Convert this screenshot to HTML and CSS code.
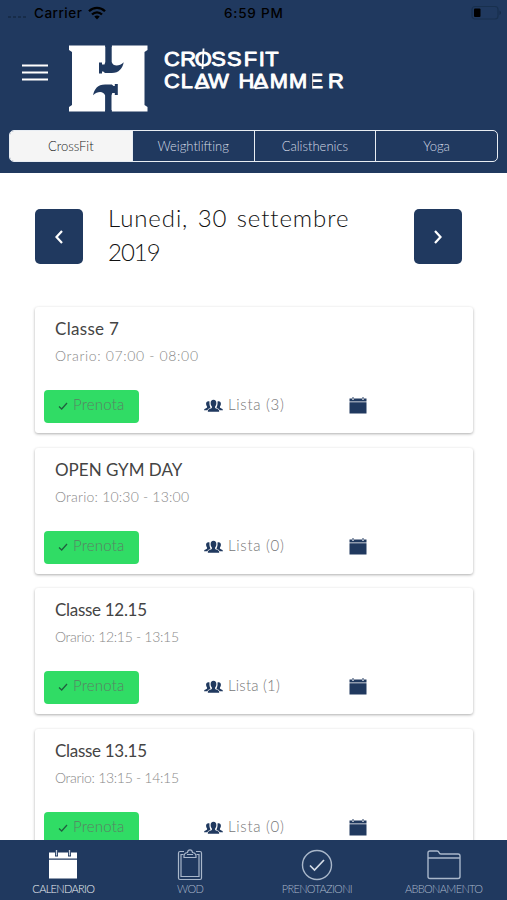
FILE: index.html
```html
<!DOCTYPE html>
<html lang="it">
<head>
<meta charset="utf-8">
<title>CrossFit Claw Hammer</title>
<link rel="stylesheet" href="styles.css">
</head>
<body>
<svg width="0" height="0" class="defs" aria-hidden="true">
  <symbol id="check" viewBox="0 0 12 12"><path d="M2 6.500 4.700 9 10 3" fill="none" stroke="currentColor" stroke-width="1.300"/></symbol>
  <symbol id="people" viewBox="0 0 20 14"><path d="M10 .5c2 0 3.200 1.400 3 3.800-.1 1.600-.7 2.500-1.300 3.200-.3 1.700.2 2 2 2.500 1.600.5 2.300 1.200 2.300 3H4c0-1.800.7-2.500 2.300-3 1.800-.5 2.300-.8 2-2.500C7.700 6.800 7.100 5.900 7 4.300 6.800 1.900 8 .5 10 .5Z"/><path d="M5.800 2.200C3.700 1.400 2 2.700 2.200 5c.1 1.400.6 2 1 2.600.3 1.400-.2 1.500-1.500 1.900C.6 9.900 0 10.500 0 11.500h3.500c.6-1.300 1.600-1.900 3.200-2.400C6.900 7.800 5.300 6.500 5.800 2.200ZM14.200 2.200c2.100-.8 3.800.5 3.600 2.800-.1 1.400-.6 2-1 2.600-.3 1.400.2 1.500 1.500 1.900 1.100.4 1.700 1 1.700 2h-3.500c-.6-1.300-1.600-1.900-3.200-2.400-.2-1.300 1.400-2.600.9-6.900Z"/></symbol>
  <symbol id="cal" viewBox="0 0 18 17"><path d="M.5 1.500h2.700v1.300h1.600V1.500h8.400v1.300h1.600V1.500h2.700v3H.5ZM.5 5.200h17V16.500H.5Z"/><path d="M3.500 0h1v2h-1ZM13.500 0h1v2h-1Z"/></symbol>
  <symbol id="hammer" viewBox="0 0 79 67"><path d="M36.300-1H42.700V17C44 21.500 50 22 54.700 17.300 53.500 23.500 50 28.300 42 28H36L34.200 26.500H33V28.500H30V17.500H33V19.500H35.500L36.300 17Z"/></symbol>
</svg>
<div class="app">
  <header class="header">
    <div class="status">
      <span class="dots"><i></i><i></i><i></i><i></i></span>
      <span class="carrier">Carrier</span>
      <svg class="wifi" width="18" height="14" viewBox="0 0 18 14"><g fill="none" stroke="#000" stroke-width="2.300"><path d="M1 5.200C5.500.7 12.500.7 17 5.200"/><path d="M4 8.500c2.900-2.900 7.100-2.900 10 0"/></g><path d="M6.300 10.600c1.600-1.500 3.800-1.500 5.400 0L9 13.500Z"/></svg>
      <span class="time">6:59 PM</span>
      <svg class="battery" width="31" height="16" viewBox="0 0 31 16"><rect x="1" y="1.500" width="26" height="12.500" rx="3" fill="none" stroke="#18304e" stroke-width="1.200"/><rect x="3" y="3.500" width="6.500" height="8.500" rx="1"/><path d="M28.500 5.500c2 1 2 3.500 0 4.500Z" fill="#152b48"/></svg>
    </div>
    <div class="brand">
      <svg class="menu" width="26" height="17" viewBox="0 0 26 17"><path d="M0 1.500h26M0 8.500h26M0 15.500h26" stroke="#fff" stroke-width="1.900"/></svg>
      <svg class="logo" width="79" height="67" viewBox="0 0 79 67"><path d="M0 .5h78.500v4.500l-3 2v53l3 2v4.500H0V62l3-2V7L0 5Z" fill="#fff"/><g fill="#20395f"><use href="#hammer" width="79" height="67"/><use href="#hammer" width="79" height="67" transform="rotate(180 39.400 33.800)"/><path d="M36.300 0h6.400v2h-6.400ZM36.300 65h6.400v2h-6.400Z"/></g></svg>
      <svg class="wordmark" width="190" height="50" viewBox="0 0 190 50"><g class="letters"><text transform="scale(1.120 1)" y="17.500" x="0 14.500 27.500 42.300 56.300 71.300 84.500 90.500">CROSSFIT</text><text transform="scale(1.120 1)" y="40" x="0 15 27.500 39.500 57 66.500 80 94.500 111.500 129 146.500">CLAW HAMMER</text></g><g fill="none" stroke="#fff" stroke-width="1.800"><path d="M39.500.5 38.500 21M32 40.300l12-1M91 40.300l12-1"/></g><path d="M146.700 24.500v17" stroke="#20395f" stroke-width="3"/></svg>
    </div>
    <nav class="tabs"><span class="on"><b>CrossFit</b></span><span><b>Weightlifting</b></span><span><b>Calisthenics</b></span><span><b>Yoga</b></span></nav>
  </header>
  <main class="content">
    <div class="day">
      <button class="arrow" aria-label="Precedente"><svg width="10" height="16" viewBox="0 0 10 16"><path d="M8 2 2.500 8 8 14" fill="none" stroke="#fff" stroke-width="2.200"/></svg></button>
      <h1><span class="d1">Lunedi, 30 settembre</span><br><span class="d2">2019</span></h1>
      <button class="arrow" aria-label="Successivo"><svg width="10" height="16" viewBox="0 0 10 16"><path d="M2 2 7.500 8 2 14" fill="none" stroke="#fff" stroke-width="2.200"/></svg></button>
    </div>
    <section class="card"><h2 class="first">Classe 7</h2><p class="wide">Orario: 07:00 - 08:00</p><div class="row"><button class="book"><svg><use href="#check"/></svg><span>Prenota</span></button><div class="list"><svg><use href="#people"/></svg><span>Lista (3)</span></div><svg class="cal"><use href="#cal"/></svg></div></section>
    <section class="card"><h2>OPEN GYM DAY</h2><p>Orario: 10:30 - 13:00</p><div class="row"><button class="book"><svg><use href="#check"/></svg><span>Prenota</span></button><div class="list"><svg><use href="#people"/></svg><span>Lista (0)</span></div><svg class="cal"><use href="#cal"/></svg></div></section>
    <section class="card"><h2 class="tight">Classe 12.15</h2><p class="narrow">Orario: 12:15 - 13:15</p><div class="row"><button class="book"><svg><use href="#check"/></svg><span>Prenota</span></button><div class="list"><svg><use href="#people"/></svg><span class="one">Lista (1)</span></div><svg class="cal"><use href="#cal"/></svg></div></section>
    <section class="card"><h2 class="tight">Classe 13.15</h2><p class="narrow">Orario: 13:15 - 14:15</p><div class="row"><button class="book"><svg><use href="#check"/></svg><span>Prenota</span></button><div class="list"><svg><use href="#people"/></svg><span>Lista (0)</span></div><svg class="cal"><use href="#cal"/></svg></div></section>
  </main>
  <footer class="bar">
    <div class="item on"><svg width="30" height="32" viewBox="0 0 30 32"><path d="M1 3.500h28v6H1ZM1 10.800h28V29.500H1Z" fill="#fff"/><path d="M8.500 2.500v5M21.500 2.500v5" stroke="#20395f" stroke-width="3"/><path d="M8.500 1v5.500M21.500 1v5.500" stroke="#c5cedb" stroke-width="1.300"/></svg><span>CALENDARIO</span></div>
    <div class="item"><svg width="26" height="32" viewBox="0 0 26 32"><g fill="none" stroke="currentColor" stroke-width="1.200"><path d="M7 2.500H3Q1.500 2.500 1.500 4v25Q1.500 30.500 3 30.500h20q1.500 0 1.500-1.500V4q0-1.500-1.500-1.500h-4"/><path d="M6.500 5.500H4V27.500h18V5.500h-2.500M7 8.500Q6.500 4 10.500 3.500c.5-3.500 4.500-3.500 5 0Q19.500 4 19 8.500Zm3-3h6"/></g></svg><span>WOD</span></div>
    <div class="item"><svg width="32" height="32" viewBox="0 0 32 32"><circle cx="16" cy="16" r="14.500" fill="none" stroke="currentColor" stroke-width="1.400"/><path d="m9 16.500 4.500 4.500L23 11" fill="none" stroke="#d4dce7" stroke-width="1.700"/></svg><span>PRENOTAZIONI</span></div>
    <div class="item"><svg width="34" height="32" viewBox="0 0 34 32"><path d="M1 9h32M1 27V4q0-2 2-2h7q1.500 0 2 1.500.5 1.500 2 1.500h17q2 0 2 2v20.500q0 2-2 2H3q-2 0-2-2Z" fill="none" stroke="currentColor" stroke-width="1.400"/></svg><span>ABBONAMENTO</span></div>
  </footer>
</div>
</body>
</html>
```
FILE: styles.css
```css
* { box-sizing: border-box; }
body { margin: 0; background: #fff; font-family: Lato, "Open Sans", sans-serif; font-weight: 300; }
.defs { position: absolute; }
svg { display: block; flex: none; }
button { border: 0; padding: 0; font: inherit; }
.app { width: 507px; height: 900px; overflow: hidden; display: flex; flex-direction: column; }
.header { height: 173px; flex: none; background: #20395f; }
.status { height: 26px; display: grid; grid-template-columns: 21px 49px 18px 1fr 31px; column-gap: 5px; padding-left: 8px; padding-right: 5px; align-items: center; font: 500 13.500px/26px Inter, sans-serif; letter-spacing: .5px; color: #000; }
.dots { display: flex; gap: 2px; padding-top: 7px; }
.dots i { width: 3px; height: 2px; background: #172c49; }
.time { padding-left: 113px; letter-spacing: .8px; }
.brand { display: flex; height: 105px; padding: 19px 0 0 22px; }
.menu { margin-top: 19px; }
.logo { margin-left: 21px; }
.wordmark { margin: 3px 0 0 16px; font: 400 19.500px "Liberation Sans", sans-serif; overflow: visible; }
.letters { fill: #fff; stroke: #fff; stroke-width: .9; stroke-linejoin: round; }
.tabs { display: grid; grid-template-columns: repeat(4, 1fr); width: 489px; height: 32px; margin: -1px 0 0 9px; border: 1px solid #e8edf3; border-radius: 5px; overflow: hidden; }
.tabs span { display: flex; align-items: center; justify-content: center; border-left: 1px solid #e8edf3; color: #d3dae5; font-size: 13px; }
.tabs b { font-weight: 300; }
.tabs .on { background: #f5f5f5; color: #222; border: 0; }
.content { flex: 1; min-height: 0; overflow: hidden; padding: 28px 34px 0 35px; }
.day { display: flex; height: 106px; padding-right: 11px; }
.arrow { width: 48px; height: 55px; margin-top: 8px; border-radius: 5px; background: #20395f; display: flex; align-items: center; justify-content: center; }
h1 { margin: 0 0 0 25px; width: 306px; font-size: 24px; line-height: 34px; font-weight: 300; color: #111; white-space: nowrap; }
.d1 { letter-spacing: .9px; word-spacing: 2px; }
.d2 { letter-spacing: -1px; }
.card { height: 126px; margin-bottom: 14.500px; padding: 11px 9px; border-radius: 3px; background: #fff; box-shadow: 0 1px 3px rgba(0,0,0,.32); }
h2 { margin: 0 0 0 11px; font-size: 17px; line-height: 22px; font-weight: 400; color: #444; }
.first { letter-spacing: .3px; }
.tight { letter-spacing: -.3px; }
p { margin: 7px 0 0 11px; font-size: 14px; line-height: 18px; letter-spacing: .2px; color: #888; }
.wide { letter-spacing: .65px; }
.narrow { letter-spacing: -.3px; }
.row { display: flex; height: 33px; margin-top: 25px; }
.book { width: 95px; height: 33px; border-radius: 4px; background: #30dc65; display: flex; padding: 10px 0 0 13px; color: #20603f; }
.book svg { width: 12px; height: 12px; }
.book span { margin: -5px 0 0 4px; font-size: 15px; line-height: 18px; letter-spacing: .2px; color: #5b8064; }
.list { display: flex; width: 145px; margin-left: 65px; padding-top: 9px; color: #777; }
.list svg { width: 19px; height: 14px; fill: #20395f; }
.list span { margin: -5px 0 0 5px; font-size: 15px; line-height: 20px; letter-spacing: .7px; }
.list .one { letter-spacing: .2px; }
.cal { width: 18px; height: 17px; margin-top: 7px; fill: #20395f; }
.bar { height: 60px; flex: none; background: #20395f; display: grid; grid-template-columns: repeat(4, 1fr); }
.item { display: flex; flex-direction: column; align-items: center; padding-top: 9px; color: #a9b7ca; font-size: 11px; line-height: 14px; letter-spacing: -.65px; }
.item span { margin-top: 1px; }
.item.on { color: #edf1f6; }
```
